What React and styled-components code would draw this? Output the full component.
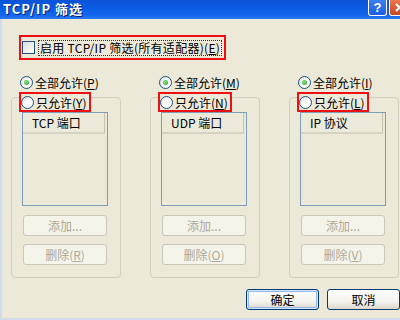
import React from 'react';
import styled, { createGlobalStyle } from 'styled-components';

const GlobalStyle = createGlobalStyle`
  html, body {
    margin: 0;
    padding: 0;
    background: #ece9d8;
  }
  body {
    font-family: "Noto Sans CJK SC", "Liberation Sans", sans-serif;
    font-size: 12px;
    color: #000;
  }
`;

const columns = [
  { header: 'TCP 端口', allKey: 'P', onlyKey: 'Y', removeKey: 'R' },
  { header: 'UDP 端口', allKey: 'M', onlyKey: 'N', removeKey: 'O' },
  { header: 'IP 协议', allKey: 'I', onlyKey: 'L', removeKey: 'V' },
];

const App = () => {
  return (
    <Window>
      <GlobalStyle />
      <TitleBar>
        <Title>TCP/IP 筛选</Title>
        <TitleButtons>
          <HelpButton>?</HelpButton>
          <CloseButton>
            <svg width="11" height="11" viewBox="0 0 11 11">
              <path d="M2 2 L9 9 M9 2 L2 9" stroke="#fff" strokeWidth="2" />
            </svg>
          </CloseButton>
        </TitleButtons>
      </TitleBar>
      <Client>
        <Highlight>
          <CheckBox />
          <FocusLabel>
            启用 TCP/IP 筛选(所有适配器)(<u>E</u>)
          </FocusLabel>
        </Highlight>

        <Columns>
          {columns.map((col) => (
            <Column key={col.header}>
              <RadioRow>
                <Radio checked />
                <span>
                  全部允许(<u>{col.allKey}</u>)
                </span>
              </RadioRow>
              <LegendRow>
                <Radio />
                <span>
                  只允许(<u>{col.onlyKey}</u>)
                </span>
              </LegendRow>
              <Group>
                <ListBox>
                  <ListHeader>{col.header}</ListHeader>
                </ListBox>
                <DisabledButton>添加...</DisabledButton>
                <DisabledButton>
                  删除(<u>{col.removeKey}</u>)
                </DisabledButton>
              </Group>
            </Column>
          ))}
        </Columns>

        <Footer>
          <PushButton $default>确定</PushButton>
          <PushButton>取消</PushButton>
        </Footer>
      </Client>
    </Window>
  );
};

export default App;

const Window = styled.div`
  width: 400px;
  height: 320px;
  overflow: hidden;
  display: flex;
  flex-direction: column;
  background: #ece9d8;
`;

const TitleBar = styled.div`
  height: 19px;
  flex: none;
  display: flex;
  align-items: flex-start;
  justify-content: space-between;
  background: linear-gradient(
    180deg,
    #0a52d6 0%,
    #0a5be4 40%,
    #1466ec 80%,
    #2a78f2 100%
  );
`;

const Title = styled.div`
  color: #fff;
  font-weight: bold;
  font-size: 13px;
  line-height: 17px;
  padding-left: 3px;
  text-shadow: 1px 1px 0 #0a1e6e;
  letter-spacing: 1px;
`;

const TitleButtons = styled.div`
  display: flex;
  gap: 2px;
  margin-right: -10px;
`;

const HelpButton = styled.div`
  width: 19px;
  height: 16px;
  box-sizing: border-box;
  border: 1px solid #fff;
  border-top: none;
  border-radius: 0 0 3px 3px;
  background: linear-gradient(180deg, #3a7ef0, #1f5fe0);
  color: #fff;
  font-weight: bold;
  font-size: 13px;
  line-height: 15px;
  text-align: center;
  font-family: "Liberation Sans", sans-serif;
`;

const CloseButton = styled(HelpButton)`
  width: 21px;
  display: flex;
  align-items: center;
  justify-content: center;
  background: linear-gradient(180deg, #e8784f, #c9461e);
`;

const Client = styled.div`
  flex: 1;
  display: flex;
  flex-direction: column;
  border-left: 2px solid #cfdbef;
  border-bottom: 2px solid #d3dcee;
`;

const Highlight = styled.div`
  align-self: flex-start;
  margin: 16px 0 0 17px;
  height: 25px;
  box-sizing: border-box;
  border: 2px solid #ee1111;
  display: flex;
  align-items: center;
  padding: 0 2px 0 1px;
  gap: 3px;
`;

const CheckBox = styled.span`
  width: 13px;
  height: 13px;
  box-sizing: border-box;
  border: 1px solid #1c5180;
  background: linear-gradient(135deg, #dcdcd7, #fff);
  flex: none;
`;

const FocusLabel = styled.span`
  border: 1px dotted #333;
  padding: 0 1px;
  line-height: 14px;
  letter-spacing: 0.3px;
  white-space: nowrap;
`;

const Columns = styled.div`
  display: flex;
  gap: 29px;
  padding-left: 9px;
  margin-top: 15px;
`;

const Column = styled.div`
  width: 110px;
  display: flex;
  flex-direction: column;
`;

const RadioRow = styled.div`
  display: flex;
  align-items: center;
  gap: 2px;
  height: 14px;
  padding-left: 9px;
  white-space: nowrap;
`;

const LegendRow = styled(RadioRow)`
  position: relative;
  z-index: 1;
  align-self: flex-start;
  margin: 3px 0 0 8px;
  padding: 0 2px 0 0;
  height: 20px;
  box-sizing: border-box;
  border: 2px solid #ee1111;
  background: #ece9d8;
`;

const Radio = styled.span`
  width: 13px;
  height: 13px;
  box-sizing: border-box;
  border-radius: 50%;
  border: 1px solid #1c5180;
  background: radial-gradient(circle at 65% 65%, #fff 30%, #d8d7d0 100%);
  flex: none;
  display: flex;
  align-items: center;
  justify-content: center;

  &::after {
    content: '';
    width: 5px;
    height: 5px;
    border-radius: 50%;
    background: ${(p) =>
      p.checked ? 'radial-gradient(circle at 40% 40%, #8fe08a, #21a121)' : 'transparent'};
  }
`;

const Group = styled.div`
  margin-top: -15px;
  height: 181px;
  box-sizing: border-box;
  border: 1px solid #d0d0bf;
  border-radius: 4px;
  padding: 14px 0 0 10px;
  display: flex;
  flex-direction: column;
  align-items: flex-start;
`;

const ListBox = styled.div`
  width: 86px;
  height: 94px;
  box-sizing: border-box;
  border: 1px solid #7f9db9;
  background: #ece9d8;
  padding-right: 2px;
  margin-bottom: 9px;
`;

const ListHeader = styled.div`
  height: 21px;
  box-sizing: border-box;
  border-bottom: 2px solid #d6d3c3;
  border-right: 1px solid #c7c5b2;
  background: #ebeadb;
  line-height: 20px;
  padding-left: 9px;
  white-space: nowrap;
`;

const DisabledButton = styled.div`
  width: 84px;
  height: 21px;
  margin: 0 0 8px 1px;
  box-sizing: border-box;
  border: 1px solid #c9c7ba;
  border-radius: 3px;
  background: #f5f4ea;
  color: #aca899;
  text-align: center;
  line-height: 19px;
  white-space: nowrap;
`;

const Footer = styled.div`
  display: flex;
  justify-content: flex-end;
  gap: 8px;
  margin-top: 11px;
  padding-right: 0;
`;

const PushButton = styled.div`
  width: 73px;
  height: 21px;
  box-sizing: border-box;
  border: 1px solid #003c74;
  border-radius: 3px;
  background: linear-gradient(180deg, #ffffff 0%, #f4f3ee 60%, #dcd8cc 100%);
  box-shadow: ${(p) =>
    p.$default ? 'inset 0 0 0 1px #cee7ff, inset 0 0 0 2px #98b8ea' : 'none'};
  text-align: center;
  line-height: 19px;
  white-space: nowrap;
`;
